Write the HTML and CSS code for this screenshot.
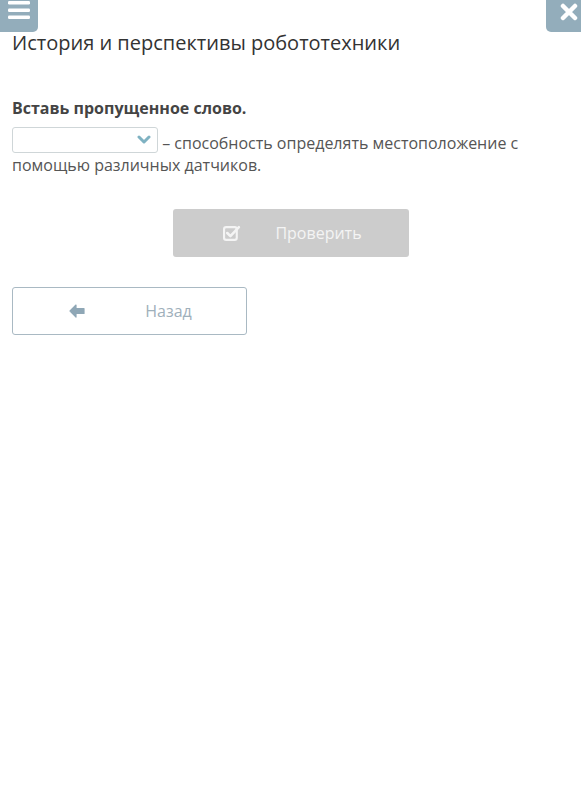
FILE: index.html
```html
<!DOCTYPE html>
<html lang="ru">
<head>
<meta charset="utf-8">
<link rel="stylesheet" href="styles.css">
</head>
<body>
<button class="corner corner-left" aria-label="Меню">
  <svg width="22" height="18" viewBox="0 0 22 18"><rect x="0" y="0" width="22" height="3.4" rx="1.2" fill="#fff"/><rect x="0" y="7.5" width="22" height="3.4" rx="1.2" fill="#fff"/><rect x="0" y="14.5" width="22" height="3.4" rx="1.2" fill="#fff"/></svg>
</button>
<button class="corner corner-right" aria-label="Закрыть">
  <svg width="18" height="18" viewBox="0 0 18 18"><path d="M3 3 L15 15 M15 3 L3 15" stroke="#fff" stroke-width="4.5" stroke-linecap="round"/></svg>
</button>
<main class="page">
  <h1 class="title">История и перспективы робототехники</h1>
  <section class="task">
    <h2 class="task-head">Вставь пропущенное слово.</h2>
    <p class="task-text"><span class="select"><svg class="chev" width="14" height="10" viewBox="0 0 14 10"><path d="M2 2 L7 7 L12 2" fill="none" stroke="#7fb2c2" stroke-width="3" stroke-linecap="round" stroke-linejoin="round"/></svg></span> – способность определять местоположение с помощью различных датчиков.</p>
  </section>
  <div class="actions">
    <button class="btn-check"><svg class="icon" width="18" height="16" viewBox="0 0 17 15"><rect x="1" y="2" width="12" height="12" rx="2" fill="none" stroke="#f4f4f4" stroke-width="2"/><path d="M4 7.5 L7 10.5 L15 2" fill="none" stroke="#f4f4f4" stroke-width="2.4" stroke-linecap="round" stroke-linejoin="round"/></svg><span>Проверить</span></button>
  </div>
  <div class="nav">
    <button class="btn-back"><svg class="icon" width="16" height="14" viewBox="0 0 16 14"><path d="M7 1 L1 7 L7 13 L7 9.5 L15 9.5 L15 4.5 L7 4.5 Z" fill="#8fa7b6" stroke="#8fa7b6" stroke-width="1.2" stroke-linejoin="round"/></svg><span>Назад</span></button>
  </div>
</main>
</body>
</html>
```
FILE: styles.css
```css
* { box-sizing: border-box; }
html, body { margin: 0; padding: 0; background: #fff; }
body { font-family: "Open Sans", "Noto Sans", sans-serif; color: #333; }
.corner {
  position: fixed; top: 0; height: 32px; border: 0; padding: 0;
  background: #93adbb; display: flex; align-items: center; justify-content: center;
}
.corner-left { left: 0; width: 38px; border-bottom-right-radius: 5px; padding-bottom: 12px; }
.corner-right { right: 0; width: 35px; border-bottom-left-radius: 5px; padding-bottom: 8px; padding-left: 11px; }
.page { padding: 30px 12px 0; }
.title { margin: 0; font-size: 20px; font-weight: 400; line-height: 26px; color: #333; }
.task { margin-top: 41px; }
.task-head { margin: 0; font-size: 16px; font-weight: 700; line-height: 22px; color: #444; }
.task-text { margin: 13px 0 0; font-size: 16px; line-height: 22px; color: #555; }
.select {
  display: inline-flex; align-items: center; justify-content: flex-end;
  width: 146px; height: 26px; vertical-align: top; margin-top: -5px;
  border: 1px solid #cfd6d8; border-radius: 3px; padding-right: 6px; background: #fff;
}
.actions { display: flex; justify-content: center; margin-top: 33px; }
.btn-check {
  width: 236px; height: 48px; border: 0; border-radius: 3px; background: #cccccc;
  display: flex; align-items: center; justify-content: center; gap: 34px;
  font-family: inherit; font-size: 16px; color: #f4f4f4; padding: 0 0 0 4px;
}
.nav { margin-top: 30px; }
.btn-back {
  width: 235px; height: 48px; border: 1px solid #a9b9c3; border-radius: 3px; background: #fff;
  display: flex; align-items: center; justify-content: center; gap: 60px;
  font-family: inherit; font-size: 16px; color: #9fb0bb; padding: 0 0 0 2px;
}
.icon { display: block; }
```
